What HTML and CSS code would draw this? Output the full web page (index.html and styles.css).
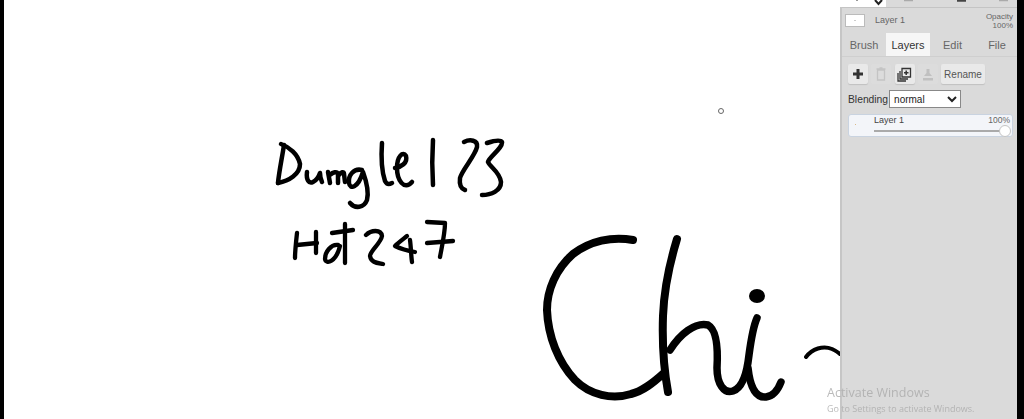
FILE: index.html
```html
<!DOCTYPE html>
<html lang="en">
<head>
<meta charset="utf-8">
<title>Layers</title>
<link rel="stylesheet" href="styles.css">
</head>
<body>
<div class="app">
  <main class="canvas">
    <svg class="ink" viewBox="0 0 840 419" width="840" height="419" fill="none" stroke="#000" stroke-linecap="round" stroke-linejoin="round">
      <g stroke-width="4.500">
        <path d="M284 145C282 158 279 172 278 183"/>
        <path d="M281 144C289 147 298 154 300 164C300 174 289 181 278 183"/>
        <path d="M307 172C306 180 309 184 313 182C317 180 319 176 320 173C320 177 321 180 322 182"/>
        <path d="M328 172L330 183M330 175C333 172 337 171 338 174L338 183M339 175C341 172 344 171 344 174L345 182"/>
        <path d="M362 170C354 168 348 175 349 183C350 190 358 188 363 172C367 183 369 192 367 200C364 208 355 209 350 203"/>
        <path d="M382 143C381 157 382 172 385 181C387 185 390 184 392 183"/>
        <path d="M395 168C401 167 408 163 406 156C403 151 397 156 397 168C397 180 404 191 412 182"/>
        <path d="M433 140C432 155 432 170 433 185"/>
        <path d="M464 142C470 139 478 140 477 147C475 156 462 170 460 178C459 186 462 189 465 190"/>
        <path d="M487 143C493 141 500 139 502 142C503 148 489 157 488 162C490 167 500 172 501 182C501 191 491 195 482 195"/>
      </g>
      <g stroke-width="4.300">
        <path d="M297 233C296 242 295 251 295 258"/>
        <path d="M316 232C316 240 316 247 316 253"/>
        <path d="M297 245L317 243"/>
        <path d="M338 245C331 244 325 252 325 259C326 265 336 262 340 246"/>
        <path d="M345 224C345 238 345 251 345 263"/>
        <path d="M332 233L353 230"/>
        <path d="M366 235C371 230 381 229 382 236C381 243 370 251 370 256C371 263 378 263 383 264"/>
        <path d="M407 236C402 240 398 243 395 246C401 249 409 251 415 252"/>
        <path d="M410 240C411 247 411 255 412 262"/>
        <path d="M427 222L445 223C445 233 442 246 440 257"/>
        <path d="M427 243L453 241"/>
      </g>
      <g stroke-width="8">
        <path d="M633 240C612 236 590 241 573 254C556 269 547 290 547 310C548 336 558 362 575 380C590 395 612 400 631 394C643 391 653 383 664 373"/>
        <path d="M677 239C670 262 664 290 663 316C662 345 664 370 668 392"/>
      </g>
      <g stroke-width="7.500">
        <path d="M670 350C680 334 695 322 708 325C717 330 718 350 717 368C717 384 724 394 733 391C742 388 747 373 749 355C751 340 753 327 757 318"/>
        <path d="M748 368C750 386 755 398 766 397C773 396 778 390 781 382"/>
      </g>
      <ellipse cx="757" cy="296" rx="8" ry="7" fill="#000" stroke="none"/>
      <path d="M806 357C812 349 823 345 832 349C836 351 838 352 840 354" stroke-width="4"/>
    </svg>
    <span class="cursor"></span>
  </main>
  <aside class="panel">
    <div class="toolbar">
      <div class="tool active">
        <svg width="46" height="7" viewBox="0 0 46 7"><path d="M16 0H18" stroke="#777" stroke-width="1.500"/><path d="M35 0L38.500 4L42 0" fill="none" stroke="#222" stroke-width="2"/></svg>
      </div>
      <svg class="tool-rest" width="131" height="7" viewBox="0 0 131 7"><path d="M18 .5H27" stroke="#aaa" stroke-width="1.500"/><path d="M71 .5H80" stroke="#444" stroke-width="2.500"/><path d="M113 .5H122" stroke="#aaa" stroke-width="1.500"/></svg>
    </div>
    <div class="current">
      <div class="thumb"><span class="thumb-dot"></span></div>
      <span class="current-name">Layer 1</span>
      <div class="opacity">Opacity<br>100%</div>
    </div>
    <nav class="tabs">
      <div class="tab">Brush</div>
      <div class="tab selected">Layers</div>
      <div class="tab">Edit</div>
      <div class="tab">File</div>
    </nav>
    <section class="content">
      <div class="actions">
        <button class="btn icon">
          <svg width="12" height="12" viewBox="0 0 12 12"><path d="M4.500 1H7.500V4.500H11V7.500H7.500V11H4.500V7.500H1V4.500H4.500Z" fill="#333"/></svg>
        </button>
        <button class="btn icon dim">
          <svg width="12" height="14" viewBox="0 0 12 14"><path d="M2.500 3H9.500V13H2.500ZM1.500 2H10.500M4.500 1H7.500" fill="none" stroke="#c4c4c4" stroke-width="1.300"/></svg>
        </button>
        <button class="btn icon">
          <svg width="15" height="15" viewBox="0 0 15 15" fill="none" stroke="#333" stroke-width="1.300"><path d="M5 1.500H13.500V10H5Z"/><path d="M3 4V12H11"/><path d="M1 6V14H9"/><path d="M9.200 3.500V8M7 5.700H11.500" stroke-width="1.500"/></svg>
        </button>
        <button class="btn icon dim">
          <svg width="12" height="13" viewBox="0 0 12 13"><path d="M4.500 1H7.500V5L10 8H2L4.500 5ZM1 10H11V12.500H1Z" fill="#c0c0c0"/></svg>
        </button>
        <button class="btn rename">Rename</button>
      </div>
      <div class="blending">
        <label class="blend-label" for="blend">Blending</label>
        <select class="blend-select" id="blend"><option>normal</option></select>
      </div>
      <div class="layer">
        <div class="layer-mark"><span class="layer-dot"></span></div>
        <div class="layer-body">
          <div class="layer-row"><span>Layer 1</span><span class="layer-pct">100%</span></div>
          <div class="slider"><span class="knob"></span></div>
        </div>
      </div>
    </section>
    <div class="activate">
      <div class="activate-title">Activate Windows</div>
      <div class="activate-sub">Go to Settings to activate Windows.</div>
    </div>
  </aside>
</div>
</body>
</html>
```
FILE: styles.css
```css
* { box-sizing: border-box; }
html, body { margin: 0; height: 100%; }
body { background: #000; overflow: hidden; font-family: "Liberation Sans", Arial, sans-serif; }
.app { display: flex; width: 1024px; height: 419px; padding: 0 7px 0 4px; }
.canvas { position: relative; width: 836px; height: 419px; background: #fff; flex: none; overflow: hidden; }
.ink { display: block; position: absolute; left: -4px; top: 0; filter: blur(.7px); }
.cursor { position: absolute; left: 714px; top: 108px; width: 6px; height: 6px; border: 1px solid #666; border-radius: 50%; }
.panel { position: relative; width: 177px; flex: none; background: #dadada; border-left: 2px solid #c6c6c6; }
.toolbar { display: flex; height: 8px; border-bottom: 1px solid #c4c4c4; }
.tool { width: 44px; height: 7px; }
.tool.active { background: #fff; margin-left: -2px; width: 46px; }
.tool svg, .tool-rest { display: block; }
.current { display: flex; align-items: center; height: 24px; padding: 0 4px 0 3px; font-size: 9px; color: #666; }
.thumb { width: 20px; height: 13px; background: #fff; border: 1px solid #bbb; display: flex; align-items: center; justify-content: center; }
.thumb-dot { width: 2px; height: 1px; background: #ccc; }
.current-name { margin-left: 10px; flex: 1; }
.opacity { text-align: right; line-height: 9px; font-size: 8px; padding-top: 2px; }
.tabs { display: grid; grid-template-columns: 44px 44px 45px 44px; height: 23px; margin-top: 1px; }
.tab { display: flex; align-items: center; justify-content: center; font-size: 11px; color: #666; }
.tab.selected { background: #f6f6f6; color: #333; }
.content { padding: 7px 6px 0 6px; border-top: 1px solid #cfcfcf; }
.actions { display: flex; gap: 3.250px; height: 20px; }
.btn { display: flex; align-items: center; justify-content: center; border: 0; padding: 0; background: #e9e9e9; border-radius: 2px; box-shadow: 0 1px 1px rgba(0,0,0,.12); font-family: inherit; }
.btn.icon { width: 20px; height: 20px; }
.btn.dim { background: #dcdcdc; box-shadow: none; }
.rename { width: 44px; height: 20px; font-size: 10px; color: #555; }
.blending { display: flex; align-items: center; gap: 1px; margin-top: 6px; }
.blend-label { font-size: 10.300px; color: #333; }
.blend-select { width: 72px; height: 18px; font-size: 10px; font-family: inherit; background: #fff; border: 1px solid #888; color: #222; padding: 0; border-radius: 0; }
.layer { display: flex; height: 23px; width: 165px; margin-top: 6px; background: #f3f5f9; border: 1px solid #c9d3e0; border-radius: 3px; }
.layer-mark { width: 25px; position: relative; }
.layer-dot { position: absolute; left: 6px; top: 9px; width: 1px; height: 1px; background: #d9b98a; }
.layer-body { flex: 1; padding-right: 2px; }
.layer-row { display: flex; justify-content: space-between; font-size: 9px; color: #444; line-height: 11px; }
.layer-pct { color: #666; font-size: 8.500px; }
.slider { position: relative; height: 2px; margin: 4px 5px 0 0; background: #aaa; }
.knob { position: absolute; right: -6px; top: -5px; width: 12px; height: 12px; background: #fff; border: 1px solid #c4c4c4; border-radius: 50%; }
.activate { position: absolute; left: -15px; top: 384px; color: #aaa; white-space: nowrap; pointer-events: none; }
.activate-title { font: 12.500px "Open Sans", sans-serif; opacity: .8; }
.activate-sub { font: 9px "Open Sans", sans-serif; margin-top: 1px; opacity: .8; }
```
